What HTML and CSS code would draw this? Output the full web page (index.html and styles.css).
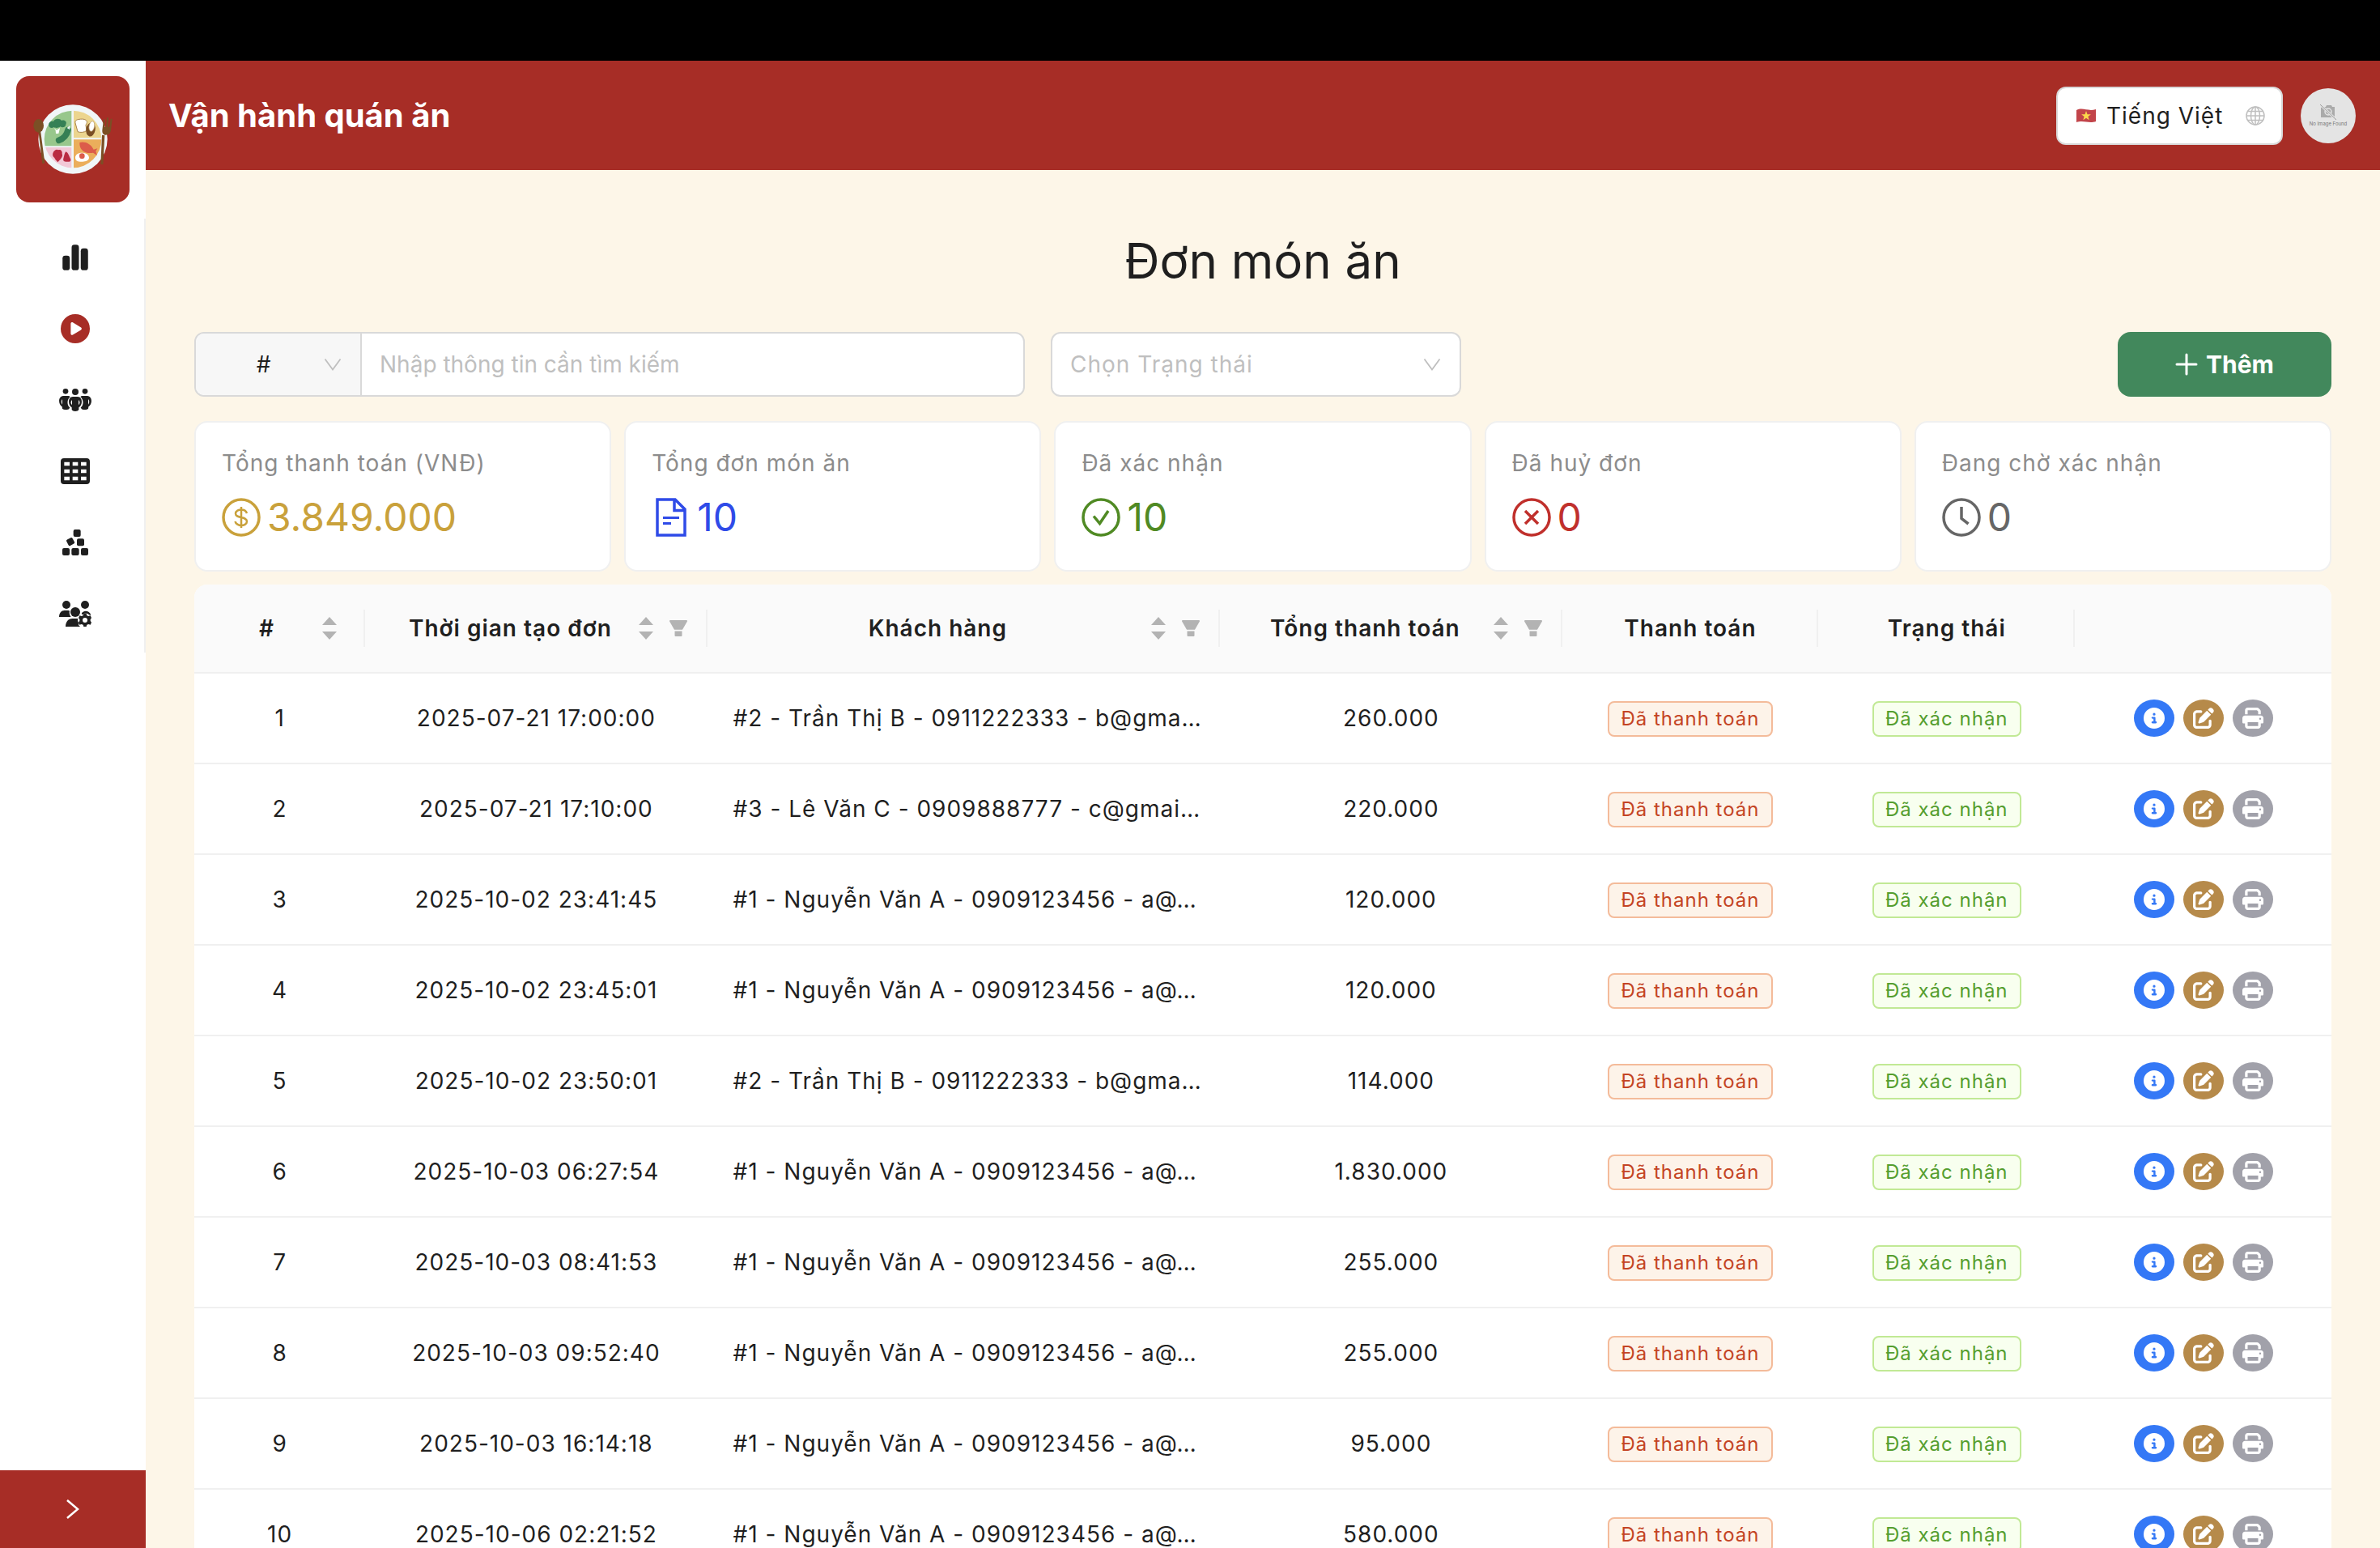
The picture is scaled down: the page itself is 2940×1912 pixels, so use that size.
FILE: index.html
```html
<!DOCTYPE html>
<html lang="vi">
<head>
<meta charset="utf-8">
<title>Đơn món ăn</title>
<link rel="stylesheet" href="styles.css">
</head>
<body>
<svg class="sprite" aria-hidden="true">
  <symbol id="chevron" viewBox="0 0 24 24"><path d="M2.500 5.500 12 18.500 21.500 5.500" fill="none" stroke="currentColor" stroke-width="1.800"/></symbol>
  <symbol id="sorter" viewBox="0 0 18 28"><path d="M9 0 18 10H0zM0 18h18L9 28z" fill="currentColor"/></symbol>
  <symbol id="filter" viewBox="0 0 22 20"><path d="M1 0h20a1 1 0 0 1 .9 1.500L16 11.800H6L.1 1.500A1 1 0 0 1 1 0zM6.500 13.500h9V19a1 1 0 0 1-1 1h-7a1 1 0 0 1-1-1z" fill="currentColor"/></symbol>
  <symbol id="info" viewBox="0 0 512 512"><path fill="currentColor" d="M256 512A256 256 0 1 0 256 0a256 256 0 1 0 0 512zM216 336h24V272H216c-13.300 0-24-10.700-24-24s10.700-24 24-24h48c13.300 0 24 10.700 24 24v88h8c13.300 0 24 10.700 24 24s-10.700 24-24 24H216c-13.300 0-24-10.700-24-24s10.700-24 24-24zm40-208a32 32 0 1 1 0 64 32 32 0 1 1 0-64z"/></symbol>
  <symbol id="edit" viewBox="0 0 512 512"><path fill="currentColor" d="M471.6 21.7c-21.900-21.900-57.300-21.900-79.200 0L362.300 51.700l97.900 97.900 30.100-30.100c21.900-21.900 21.900-57.300 0-79.200L471.600 21.700zm-299.200 220c-6.100 6.100-10.800 13.600-13.500 21.900l-29.600 88.800c-2.900 8.600-.6 18.100 5.800 24.600s15.900 8.700 24.600 5.800l88.800-29.600c8.200-2.700 15.700-7.400 21.900-13.500L437.700 172.300 339.700 74.300 172.400 241.700zM96 64C43 64 0 107 0 160V416c0 53 43 96 96 96H352c53 0 96-43 96-96V320c0-17.700-14.300-32-32-32s-32 14.300-32 32v96c0 17.700-14.300 32-32 32H96c-17.700 0-32-14.300-32-32V160c0-17.700 14.300-32 32-32h96c17.700 0 32-14.300 32-32s-14.300-32-32-32H96z"/></symbol>
  <symbol id="print" viewBox="0 0 512 512"><path fill="currentColor" d="M128 0C92.700 0 64 28.700 64 64v96h64V64H354.700L384 93.300V160h64V93.300c0-17-6.700-33.300-18.700-45.300L400 18.700C388 6.700 371.700 0 354.700 0H128zM384 352v32 64H128V384 368 352H384zm64 32h32c17.700 0 32-14.300 32-32V256c0-35.300-28.700-64-64-64H64c-35.300 0-64 28.700-64 64v96c0 17.700 14.300 32 32 32H64v64c0 35.300 28.700 64 64 64H384c35.300 0 64-28.700 64-64V384zM432 248a24 24 0 1 1 0 48 24 24 0 1 1 0-48z"/></symbol>
</svg>

<div class="notch"></div>
<div class="app">
  <aside class="sidebar">
    <a class="logo" href="#" aria-label="Trang chủ">
      <svg width="100" height="88" viewBox="0 0 300 264">
        <clipPath id="plate"><circle cx="150" cy="132" r="106"/></clipPath>
        <circle cx="150" cy="132" r="128" fill="#f1f6f8"/>
        <g clip-path="url(#plate)">
          <path fill="#98c78c" d="M40 20h105v137H40z"/><path fill="#ecd58f" d="M153 20h110v107H153z"/>
          <path fill="#f2c8d6" d="M40 162h105v90H40z"/><path fill="#ebae5b" d="M153 133h110v120H153z"/>
        </g>
        <path fill="#358055" d="M62 84c-6-14 8-22 16-18 6-12 24-12 30-3 10-5 22 4 16 14 0 10-14 14-20 8-8 6-20 6-24 2-6 4-16 4-18-3z"/>
        <path fill="#fff" d="M80 90l10 8 12-8-2 9-3 12H87l-1-12z"/>
        <path d="M98 136c18-6 30-22 34-38" stroke="#358055" stroke-width="23" stroke-linecap="round" fill="none"/><path d="M128 90l12-9-2 15z" fill="#f1f6f8"/>
        <path fill="#fff" stroke="#a9824a" stroke-width="3" d="M160 75c-4-12 4-16 14-17 14-2 26 0 28 9 1 6-3 9-4 12l3 21c-8 7-24 8-33 4z"/>
        <ellipse cx="216" cy="96" rx="17" ry="26" fill="#7b4f25" transform="rotate(10 216 96)"/><ellipse cx="220" cy="84" rx="10" ry="19" fill="#fff" stroke="#b89a62" stroke-width="2" transform="rotate(10 220 84)"/>
        <path fill="#dc5c4a" d="M175 144c18-6 42 4 52 26l14-4-6 10 5 16-15-10c-26 6-52-8-50-38z"/>
        <path fill="#fff" d="M159 200c0-12 12-18 24-18 16 0 28 8 27 20-2 10-14 14-28 13-14 0-23-4-23-15z"/><circle cx="184" cy="194" r="10" fill="#dc5c4a"/>
        <path fill="#b92b42" d="M76 184c4-12 14-16 20-12 10-4 16 6 14 14 4 8-2 14-6 20l-10 11c-4-6-10-10-12-16-6-4-8-10-6-17zM124 178c10 4 12 18 18 28 2 8-6 10-12 9-10 1-18-2-15-12 3-9 3-18 9-25z"/>
        <g fill="#7b4f25"><ellipse cx="23" cy="82" rx="19" ry="25"/><path d="M22 100l8-2 16 122-9 3zM258 116l10 2-6 108-9-2z"/><path d="M264 58h5l-1 28h5l3-34h6l-2 34h5l5-30h6l-5 44c-3 14-12 16-19 16s-14-6-13-18z"/></g>
      </svg>
    </a>
    <nav class="menu" aria-label="Điều hướng">
      <a class="menu-item" href="#" aria-label="Thống kê"><svg width="32" height="36" viewBox="0 0 448 512" fill="currentColor"><rect y="224" width="128" height="256" rx="48"/><rect x="160" y="32" width="128" height="448" rx="48"/><rect x="320" y="96" width="128" height="384" rx="48"/></svg></a>
      <a class="menu-item is-active" href="#" aria-label="Vận hành"><svg width="36" height="36" viewBox="0 0 512 512" fill="currentColor"><path d="M0 256a256 256 0 1 1 512 0A256 256 0 1 1 0 256zM188.300 147.100c-7.600 4.200-12.300 12.300-12.300 20.900V344c0 8.700 4.700 16.700 12.300 20.900s16.800 4.100 24.300-.5l144-88c7.100-4.400 11.500-12.100 11.500-20.500s-4.400-16.100-11.500-20.500l-144-88c-7.400-4.500-16.700-4.700-24.300-.5z"/></svg></a>
      <a class="menu-item" href="#" aria-label="Khách hàng"><svg width="40" height="28" viewBox="0 0 120 84" fill="currentColor"><circle cx="24" cy="10" r="10"/><circle cx="96" cy="10" r="10"/><circle cx="60" cy="12" r="12"/><path fill-rule="evenodd" d="M15 27h18c4 0 6 1 8 4-12 9-13 30-1 39l-3 5c-3 4-22 4-25-1l-1-7C-4 58-4 29 15 27zM12 39c-5 6-5 14 0 20z"/><path fill-rule="evenodd" d="M105 27H87c-4 0-6 1-8 4 12 9 13 30 1 39l3 5c3 4 22 4 25-1l1-7c15-9 15-38-4-40zM108 39c5 6 5 14 0 20z"/><path fill-rule="evenodd" d="M51 30h18c18 0 20 30 4 40v8c-3 8-23 8-26 0v-8c-16-10-14-40 4-40zM48 42c-6 6-6 13 0 19zM72 42c6 6 6 13 0 19z"/></svg></a>
      <a class="menu-item" href="#" aria-label="Bàn"><svg width="36" height="32" viewBox="0 0 108 96" fill="currentColor"><path fill-rule="evenodd" d="M12 0h84c8 0 12 4 12 12v72c0 8-4 12-12 12H12C4 96 0 92 0 84V12C0 4 4 0 12 0zM13 14v14h20V14zM44 14v14h20V14zM75 14v14h20V14zM13 41v14h20V41zM44 41v14h20V41zM75 41v14h20V41zM13 68v14h20V68zM44 68v14h20V68zM75 68v14h20V68z"/></svg></a>
      <a class="menu-item" href="#" aria-label="Nguyên liệu"><svg width="32" height="32" viewBox="0 0 96 96" fill="currentColor"><rect x="41" y="0" width="27" height="27" rx="6"/><rect x="18" y="33" width="25" height="25" rx="5" transform="rotate(-28 30 46)"/><rect x="54" y="34" width="27" height="27" rx="6"/><rect y="69" width="27" height="27" rx="6"/><rect x="34" y="69" width="28" height="27" rx="6"/><rect x="69" y="69" width="27" height="27" rx="6"/></svg></a>
      <a class="menu-item" href="#" aria-label="Nhân sự"><svg width="40" height="32" viewBox="0 0 120 96" fill="currentColor"><circle cx="27" cy="15" r="15"/><circle cx="96" cy="15" r="15"/><circle cx="60" cy="42" r="18"/><path d="M0 60C0 46 8 36 20 36h14c2 0 4 1 5 2-2 9 0 16 5 22zM24 96c0-18 10-30 26-30h20c-2 8 0 13 4 17l-2 6c2 4 6 7 10 7zM84 46c8-12 26-10 34 5-3 3-5 2-8 0-4-5-19-5-22 0-3 1-5-1-4-5z"/><path fill-rule="evenodd" d="M91 48h10l2 7 6 2 7-2 4 9-4 5v6l4 5-4 9-7-2-6 2-2 7H91l-2-7-6-2-7 2-4-9 4-5v-6l-4-5 4-9 7 2 6-2zM96 63a9 9 0 1 0 0 18 9 9 0 0 0 0-18z"/></svg></a>
    </nav>
    <button class="collapse" type="button" aria-label="Mở rộng"><svg width="18" height="26" viewBox="0 0 18 26"><path d="M2 2l13 11L2 24" fill="none" stroke="currentColor" stroke-width="2.500"/></svg></button>
  </aside>

  <div class="body">
    <header class="topbar">
      <div class="topbar-title">Vận hành quán ăn</div>
      <div class="topbar-tools">
        <div class="field language">
          <svg width="26" height="20" viewBox="0 0 26 20"><path d="M1 3c8-4 14 2 24-1v15c-9 3-15-2-24 1z" fill="#c2444a"/><path d="M13 4l1.500 4.200 4.400.1-3.500 2.700 1.300 4.300-3.700-2.500-3.700 2.500L10.600 11 7.100 8.300l4.400-.1z" fill="#fbd84b"/></svg>
          <select aria-label="Ngôn ngữ"><option>Tiếng Việt</option></select>
          <svg class="muted" width="24" height="24" viewBox="0 0 24 24" fill="none" stroke="currentColor" stroke-width="1.500"><circle cx="12" cy="12" r="11"/><ellipse cx="12" cy="12" rx="5.500" ry="11"/><path d="M12 1v22M1 12h22M3 6.500h18M3 17.500h18"/></svg>
        </div>
        <button class="avatar" type="button">
          <svg width="20" height="20" viewBox="0 0 20 20"><path d="M2 3h5l1-2h6l1 2h3v13H1V4z" fill="#aaa"/><circle cx="10" cy="9" r="4" fill="none" stroke="#e4e4e4" stroke-width="1.500"/><path d="M0 0l20 19" stroke="#e4e4e4" stroke-width="3"/><path d="M0 0l20 19" stroke="#999" stroke-width="1"/></svg>
          <span>No Image Found</span>
        </button>
      </div>
    </header>

    <main class="content">
      <h1>Đơn món ăn</h1>
      <div class="toolbar">
        <div class="search">
          <div class="picker search-type"><select aria-label="Trường tìm kiếm"><option>#</option></select><svg class="muted" width="24" height="24"><use href="#chevron"/></svg></div>
          <input type="text" aria-label="Tìm kiếm" placeholder="Nhập thông tin cần tìm kiếm">
        </div>
        <div class="picker status"><select aria-label="Trạng thái"><option>Chọn Trạng thái</option></select><svg class="muted" width="24" height="24"><use href="#chevron"/></svg></div>
        <span></span>
        <button class="add" type="button"><svg width="28" height="28" viewBox="0 0 28 28"><path d="M14 2v24M2 14h24" stroke="currentColor" stroke-width="3" stroke-linecap="round"/></svg>Thêm</button>
      </div>

      <section class="stats">
        <div class="stat"><div class="stat-label">Tổng thanh toán (VNĐ)</div><div class="stat-value gold"><svg width="48" height="48" viewBox="0 0 48 48" fill="none" stroke="currentColor" stroke-width="3.500"><circle cx="24" cy="24" r="22"/><path d="M24 11v26M31 19c-1-3-4-4.500-7-4.500s-7 1.500-7 5c0 6 14 3 14 9.500 0 3.500-4 5-7 5s-7-2-7.500-5" stroke-width="2.500"/></svg>3.849.000</div></div>
        <div class="stat"><div class="stat-label">Tổng đơn món ăn</div><div class="stat-value blue"><svg width="48" height="48" viewBox="0 0 48 48" fill="none" stroke="currentColor" stroke-width="3.500"><path d="M7 2h22l12 12v32H7zM28 2v13.500h13"/><path d="M14 24.500h20M14 31.500h10" stroke-width="3"/></svg>10</div></div>
        <div class="stat"><div class="stat-label">Đã xác nhận</div><div class="stat-value green"><svg width="48" height="48" viewBox="0 0 48 48" fill="none" stroke="currentColor" stroke-width="3.500"><circle cx="24" cy="24" r="22"/><path d="M15 22.500l7.500 9L33 16"/></svg>10</div></div>
        <div class="stat"><div class="stat-label">Đã huỷ đơn</div><div class="stat-value red"><svg width="48" height="48" viewBox="0 0 48 48" fill="none" stroke="currentColor" stroke-width="3.500"><circle cx="24" cy="24" r="22"/><path d="M16 16l16 16M32 16L16 32"/></svg>0</div></div>
        <div class="stat"><div class="stat-label">Đang chờ xác nhận</div><div class="stat-value gray"><svg width="48" height="48" viewBox="0 0 48 48" fill="none" stroke="currentColor" stroke-width="3.500"><circle cx="24" cy="24" r="22"/><path d="M24 11v14.500l8.500 6.500"/></svg>0</div></div>
      </section>

      <table class="orders">
        <colgroup><col class="w8"><col class="w16"><col class="w24"><col class="w16"><col class="w12"><col class="w12"><col class="w12"></colgroup>
        <thead><tr>
          <th scope="col"><div class="head sortable"><span>#</span><svg width="24" height="28"><use href="#sorter"/></svg></div></th>
          <th scope="col"><div class="head filterable"><span>Thời gian tạo đơn</span><svg width="24" height="28"><use href="#sorter"/></svg><svg class="filter" width="24" height="20"><use href="#filter"/></svg></div></th>
          <th scope="col"><div class="head filterable"><span>Khách hàng</span><svg width="24" height="28"><use href="#sorter"/></svg><svg class="filter" width="24" height="20"><use href="#filter"/></svg></div></th>
          <th scope="col"><div class="head filterable"><span>Tổng thanh toán</span><svg width="24" height="28"><use href="#sorter"/></svg><svg class="filter" width="24" height="20"><use href="#filter"/></svg></div></th>
          <th scope="col"><div class="head"><span>Thanh toán</span></div></th>
          <th scope="col"><div class="head"><span>Trạng thái</span></div></th>
          <td></td>
        </tr></thead>
        <tbody id="rows"></tbody>
      </table>
    </main>
  </div>
</div>
<script src="script.js"></script>
</body>
</html>
```
FILE: script.js
```js
const a = '#1 - Nguyễn Văn A - 0909123456 - a@…';
const b = '#2 - Trần Thị B - 0911222333 - b@gma…';
const c = '#3 - Lê Văn C - 0909888777 - c@gmai…';

const orders = [
  ['2025-07-21 17:00:00', b, '260.000'],
  ['2025-07-21 17:10:00', c, '220.000'],
  ['2025-10-02 23:41:45', a, '120.000'],
  ['2025-10-02 23:45:01', a, '120.000'],
  ['2025-10-02 23:50:01', b, '114.000'],
  ['2025-10-03 06:27:54', a, '1.830.000'],
  ['2025-10-03 08:41:53', a, '255.000'],
  ['2025-10-03 09:52:40', a, '255.000'],
  ['2025-10-03 16:14:18', a, '95.000'],
  ['2025-10-06 02:21:52', a, '580.000'],
];

const action = (name, label) =>
  `<button class="action ${name}" type="button" aria-label="${label}"><svg width="26" height="26"><use href="#${name}"/></svg></button>`;

document.getElementById('rows').innerHTML = orders.map(([time, customer, total], i) => `
  <tr>
    <td>${i + 1}</td>
    <td>${time}</td>
    <td class="customer">${customer}</td>
    <td>${total}</td>
    <td><span class="tag paid">Đã thanh toán</span></td>
    <td><span class="tag confirmed">Đã xác nhận</span></td>
    <td><div class="actions">${action('info', 'Chi tiết')}${action('edit', 'Sửa')}${action('print', 'In')}</div></td>
  </tr>`).join('');
```
FILE: styles.css
```css
* { box-sizing: border-box; }

:root {
  --red: #a72d26;
  --line: #f0f0f0;
  --border: #d9d9d9;
  --text: #1f1f1f;
}

body {
  margin: 0;
  height: 100vh;
  display: flex;
  flex-direction: column;
  overflow: hidden;
  background: #fdf6e8;
  color: var(--text);
  font: 28px/44px Inter, "Noto Sans", sans-serif;
}

svg { display: block; flex: none; }
.sprite { width: 0; height: 0; position: absolute; }
button, input, select { font: inherit; color: inherit; border: 0; margin: 0; }
button { cursor: pointer; padding: 0; }
select { appearance: none; background: none; padding: 0; letter-spacing: inherit; }

.notch { height: 75px; flex: none; background: #000; }
.app { flex: 1; min-height: 0; display: flex; }

.sidebar {
  width: 180px;
  flex: none;
  display: flex;
  flex-direction: column;
  background: #fff;
}
.logo {
  height: 156px;
  margin: 19px 20px 20px;
  border-radius: 16px;
  background: var(--red);
  display: grid;
  place-items: center;
}
.menu { padding: 4px 0; border-right: 2px solid var(--line); }
.menu-item {
  height: 88px;
  padding-left: 8px;
  display: grid;
  place-items: center;
  color: var(--text);
}
.menu-item.is-active { color: var(--red); }
.collapse {
  height: 96px;
  margin-top: auto;
  background: var(--red);
  color: #fff;
  display: grid;
  place-items: center;
}

.body { flex: 1; min-width: 0; display: flex; flex-direction: column; }
.topbar {
  height: 135px;
  flex: none;
  padding: 0 30px 0 28px;
  display: flex;
  align-items: center;
  justify-content: space-between;
  background: var(--red);
  color: #fff;
}
.topbar-title { font-size: 40px; font-weight: 700; }
.topbar-tools { display: flex; align-items: center; gap: 22px; }
.muted { color: #bfbfbf; }
.language {
  width: 280px;
  height: 72px;
  padding: 0 20px 0 22px;
  display: flex;
  align-items: center;
  gap: 12px;
  border: 2px solid var(--border);
  border-radius: 12px;
  background: #fff;
  color: var(--text);
  letter-spacing: 1px;
}
.language select { flex: 1; min-width: 0; }
.avatar {
  width: 68px;
  height: 68px;
  border-radius: 50%;
  background: #e4e4e4;
  color: #777;
  display: flex;
  flex-direction: column;
  align-items: center;
  justify-content: center;
  font-size: 6px;
  line-height: 8px;
  white-space: nowrap;
}

.content { flex: 1; min-height: 0; padding: 72px 60px; overflow: auto; scrollbar-width: none; }
h1 {
  margin: 0 0 48px;
  font-size: 60px;
  line-height: 80px;
  font-weight: 400;
  text-align: center;
}

.toolbar {
  display: grid;
  grid-template-columns: 81fr 40fr 59fr auto;
  gap: 32px;
  margin-bottom: 30px;
}
.search, .status {
  height: 80px;
  border: 2px solid var(--border);
  border-radius: 12px;
  background: #fff;
  overflow: hidden;
}
.search { display: flex; }
.search input { flex: 1; min-width: 0; padding: 0 22px; background: none; outline: 0; }
.search input::placeholder { color: #bfbfbf; opacity: 1; }
.picker { display: grid; align-items: center; }
.picker select, .picker svg { grid-area: 1 / 1; }
.picker svg { justify-self: end; margin-right: 22px; pointer-events: none; }
.picker select { height: 100%; padding: 0 22px; }
.search-type { width: 205px; background: #f7f7f7; border-right: 2px solid var(--border); }
.search-type select { padding: 0 58px 0 22px; text-align-last: center; }
.status { color: #bfbfbf; letter-spacing: 1px; }
.add {
  width: 264px;
  height: 80px;
  display: flex;
  align-items: center;
  justify-content: center;
  gap: 10px;
  border-radius: 16px;
  background: #42885c;
  color: #fff;
  font-size: 30px;
  font-weight: 700;
}

.stats { display: grid; grid-template-columns: repeat(5, 1fr); gap: 16px; margin-bottom: 16px; }
.stat {
  padding: 28px 32px;
  border: 2px solid var(--line);
  border-radius: 16px;
  background: #fff;
}
.stat-label { color: #8c8c8c; letter-spacing: 1px; }
.stat-value {
  margin-top: 8px;
  display: flex;
  align-items: center;
  gap: 8px;
  font-size: 48px;
  line-height: 74px;
}
.gold { color: #c9a13b; }
.blue { color: #2f4be8; }
.green { color: #508a24; }
.red { color: #c0302c; }
.gray { color: #666; }

.orders {
  width: 100%;
  table-layout: fixed;
  border-collapse: separate;
  border-spacing: 0;
  border-radius: 16px 16px 0 0;
  background: #fff;
  overflow: hidden;
  letter-spacing: 1px;
}
.w8 { width: 8%; }
.w12 { width: 12%; }
.w16 { width: 16%; }
.w24 { width: 24%; }
.orders th, .orders td { padding: 0 32px; border-bottom: 2px solid var(--line); text-align: center; white-space: nowrap; }
.orders thead th, .orders thead td { height: 110px; padding: 0; background: #fafafa; font-weight: 600; }
.orders tbody td { height: 112px; }
.orders tbody .customer { text-align: left; }
.head {
  height: 46px;
  padding: 0 30px 0 32px;
  display: flex;
  align-items: center;
  gap: 8px;
  border-right: 2px solid var(--line);
}
.head span { flex: 1; }
.head svg { color: #b3b3b3; }
.head .filter { margin-left: 8px; }
.head.filterable { padding-right: 22px; }

.tag {
  display: inline-block;
  padding: 0 14px;
  border: 2px solid;
  border-radius: 8px;
  font-size: 24px;
  line-height: 40px;
  vertical-align: middle;
}
.paid { color: #c44424; background: #fdf3e9; border-color: #f4bb9a; }
.confirmed { color: #559e2f; background: #f8ffef; border-color: #c1e995; }

.actions { display: flex; justify-content: center; gap: 11px; }
.action {
  width: 50px;
  height: 46px;
  border-radius: 50%;
  display: grid;
  place-items: center;
  color: #fff;
}
.info { background: #3478f6; }
.edit { background: #b68a4a; }
.print { background: #a1a1aa; }
```
